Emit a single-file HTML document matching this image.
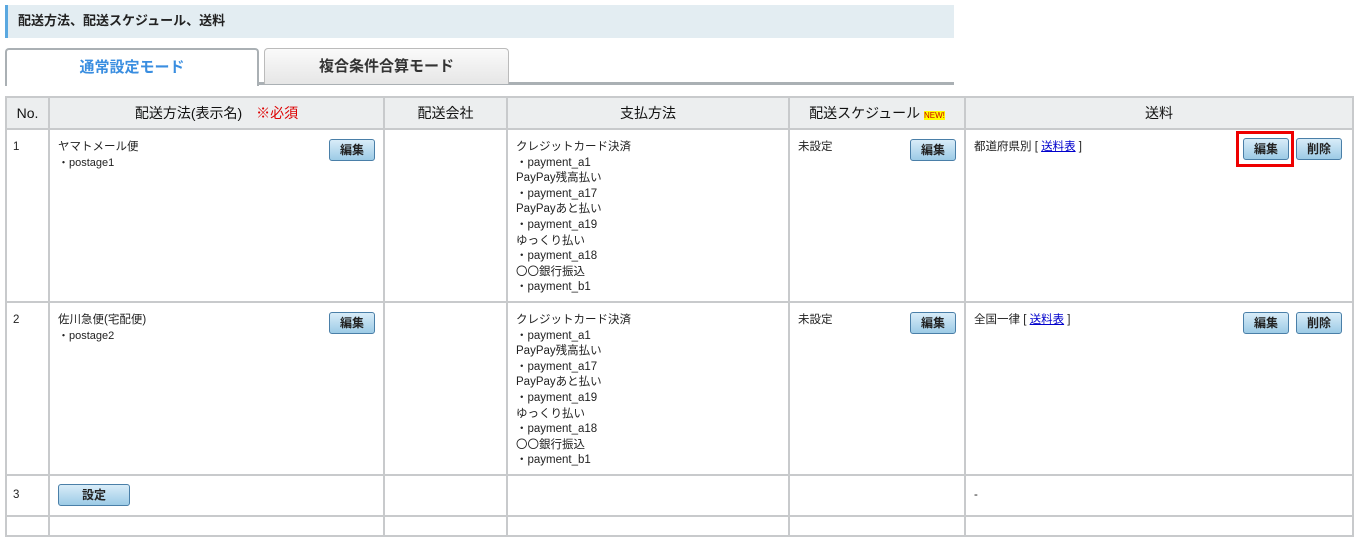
<!DOCTYPE html><html><head><meta charset="utf-8"><style>
body{margin:0;width:1357px;height:520px;overflow:hidden;background:#fff;font-family:"Liberation Sans","Noto Sans CJK JP",sans-serif;font-size:12px;color:#222}
.hd{position:absolute;left:5px;top:5px;height:33px;background:#e3edf2;border-left:3px solid #5aa8e0;font-size:13px;font-weight:bold;line-height:31px;padding-left:10px;box-sizing:border-box;width:949px}
.tab{position:absolute;top:48px;height:36px;box-sizing:border-box;border:1px solid #bbb;border-bottom:none;border-radius:4px 4px 0 0;text-align:center;line-height:36px;font-size:15px;font-weight:bold}
.line{position:absolute;left:5px;top:82px;width:949px;height:3px;background:#aab0b4}
table{position:absolute;left:5px;top:96px;border-collapse:collapse;width:1349px}
td,th{border:2px solid #c8cacc;vertical-align:top;padding:0;position:relative}
th{background:#eceeef;height:30px;font-size:14px;vertical-align:middle;font-weight:normal;color:#111}
.b{position:absolute;height:22px;box-sizing:border-box;border:1px solid #4a7fa8;border-radius:3px;background:linear-gradient(#d8ecf8,#9ccbe6);font-weight:bold;font-size:12px;text-align:center;line-height:20px}
.t{position:absolute;left:8px;top:10px;line-height:15.6px;font-size:11.5px}
a{color:#00c;text-decoration:underline}
</style></head><body>
<div class="hd">配送方法、配送スケジュール、送料</div>
<div class="line"></div>
<div class="tab" style="left:5px;width:254px;height:38px;background:#fff;color:#3a8ee0;border-color:#aab0b4;border-width:2px">通常設定モード</div>
<div class="tab" style="left:264px;width:245px;background:linear-gradient(#fafafa,#e6e6e6);color:#333">複合条件合算モード</div>
<table>
<tr><th style="width:41px">No.</th><th style="width:333px">配送方法(表示名)　<span style="color:#d00">※必須</span></th><th style="width:121px">配送会社</th><th style="width:280px">支払方法</th><th style="width:174px">配送スケジュール <span style="background:#ff0;color:#c00;font-size:8px">NEW!</span></th><th>送料</th></tr>
<tr style="height:173px"><td><div class="t" style="left:6px">1</div></td><td><div class="t">ヤマトメール便<br><span style="font-size:11px">・postage1</span></div><div class="b" style="left:279px;top:9px;width:46px">編集</div></td><td></td><td><div class="t">クレジットカード決済<br>・payment_a1<br>PayPay残高払い<br>・payment_a17<br>PayPayあと払い<br>・payment_a19<br>ゆっくり払い<br>・payment_a18<br>〇〇銀行振込<br>・payment_b1</div></td><td><div class="t">未設定</div><div class="b" style="left:120px;top:9px;width:46px">編集</div></td><td><div class="t">都道府県別 [ <a>送料表</a> ]</div><div style="position:absolute;left:270px;top:1px;width:58px;height:36px;border:3px solid #e00;box-sizing:border-box"></div><div class="b" style="left:277px;top:8px;width:46px">編集</div><div class="b" style="left:330px;top:8px;width:46px">削除</div></td></tr>
<tr style="height:173px"><td><div class="t" style="left:6px">2</div></td><td><div class="t">佐川急便(宅配便)<br><span style="font-size:11px">・postage2</span></div><div class="b" style="left:279px;top:9px;width:46px">編集</div></td><td></td><td><div class="t">クレジットカード決済<br>・payment_a1<br>PayPay残高払い<br>・payment_a17<br>PayPayあと払い<br>・payment_a19<br>ゆっくり払い<br>・payment_a18<br>〇〇銀行振込<br>・payment_b1</div></td><td><div class="t">未設定</div><div class="b" style="left:120px;top:9px;width:46px">編集</div></td><td><div class="t">全国一律 [ <a>送料表</a> ]</div><div class="b" style="left:277px;top:9px;width:46px">編集</div><div class="b" style="left:330px;top:9px;width:46px">削除</div></td></tr>
<tr style="height:41px"><td><div class="t" style="left:6px;top:12px">3</div></td><td><div class="b" style="left:8px;top:8px;width:72px">設定</div></td><td></td><td></td><td></td><td><div class="t" style="top:12px">-</div></td></tr>
<tr style="height:20px"><td></td><td></td><td></td><td></td><td></td><td></td></tr>
</table>
</body></html>
